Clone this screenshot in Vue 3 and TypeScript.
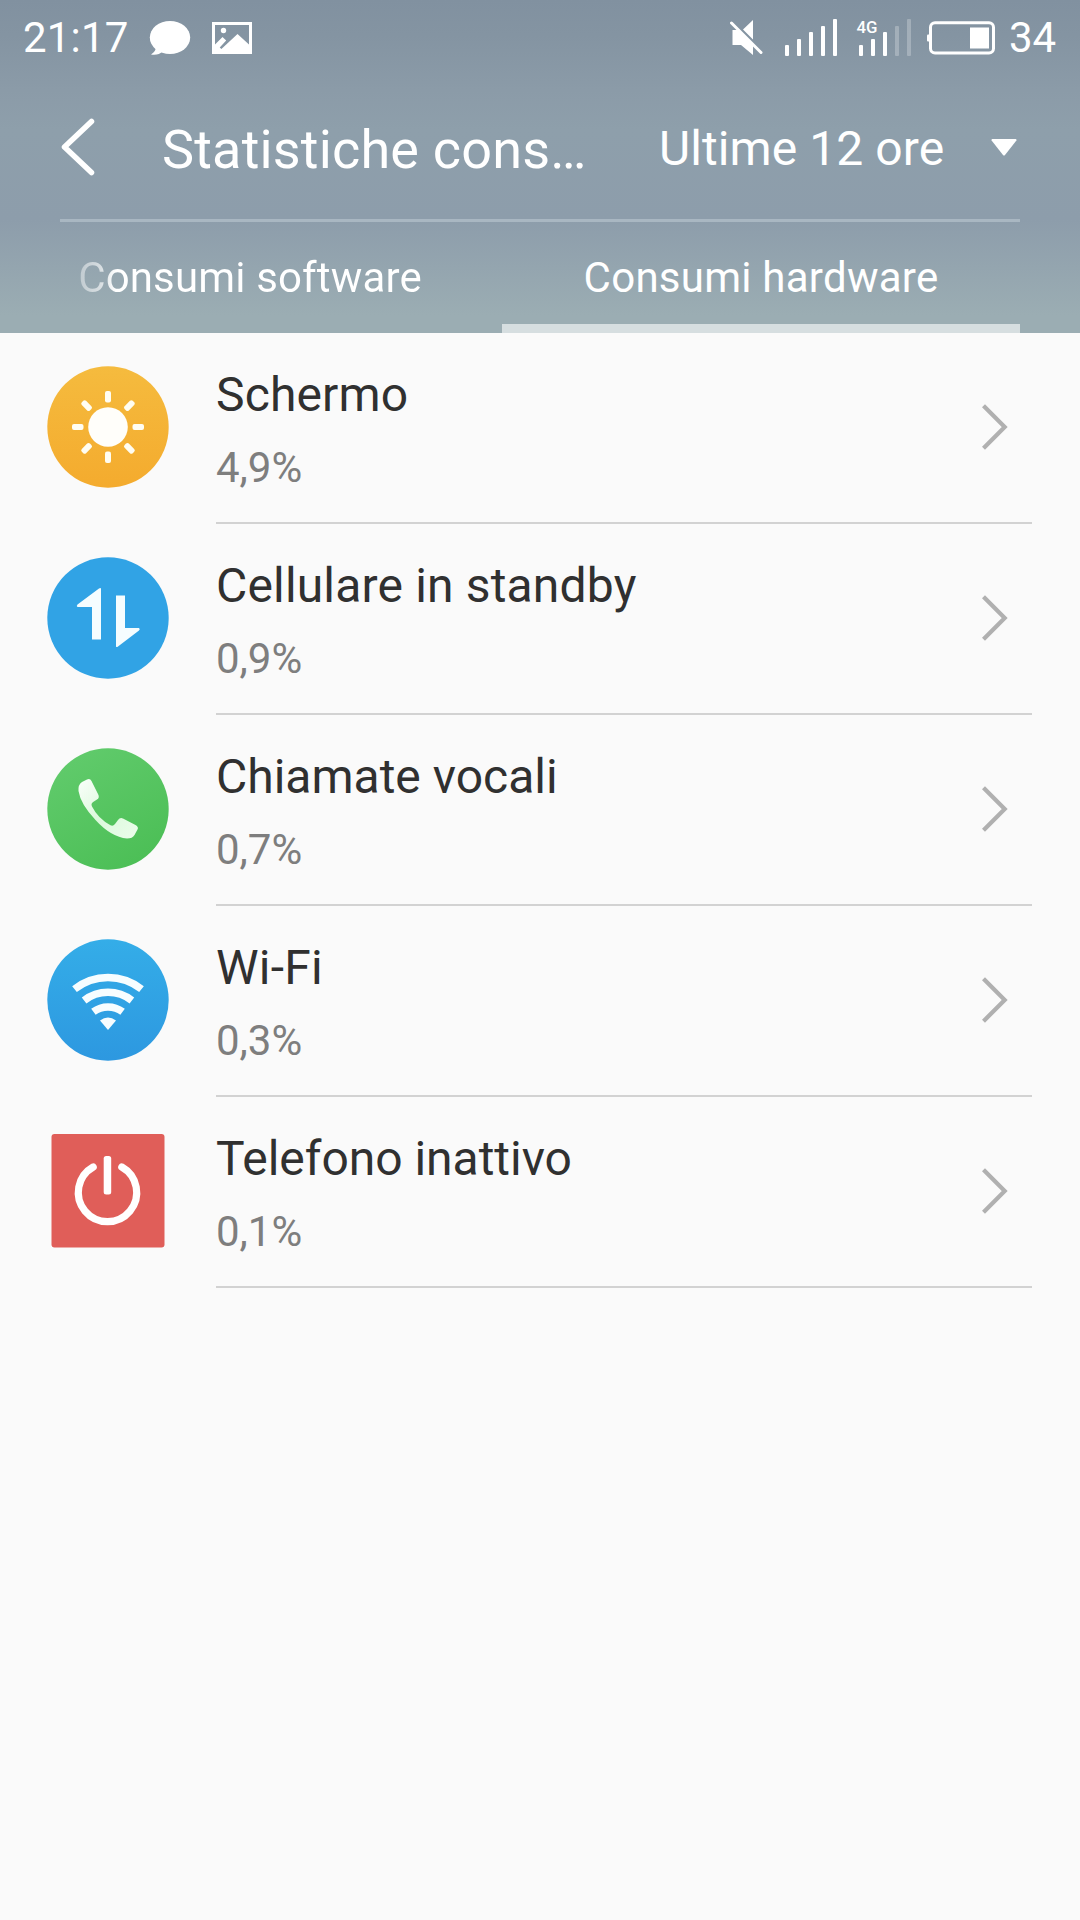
<script setup lang="ts">
import { ref } from 'vue'

type IconName = 'screen' | 'data' | 'call' | 'wifi' | 'power'

interface Consumer {
  icon: IconName
  name: string
  share: string
  spacing: string
}

const consumers: Consumer[] = [
  { icon: 'screen', name: 'Schermo', share: '4,9%', spacing: '0.15px' },
  { icon: 'data', name: 'Cellulare in standby', share: '0,9%', spacing: '0.17px' },
  { icon: 'call', name: 'Chiamate vocali', share: '0,7%', spacing: '0px' },
  { icon: 'wifi', name: 'Wi-Fi', share: '0,3%', spacing: '0.25px' },
  { icon: 'power', name: 'Telefono inattivo', share: '0,1%', spacing: '-0.03px' },
]

const tabs = ['Consumi software', 'Consumi hardware']
const activeTab = ref(1)

const bars = [
  { x: 0, top: 26 },
  { x: 12, top: 20 },
  { x: 24, top: 13 },
  { x: 36, top: 7 },
  { x: 48, top: 0 },
]
const rays = [0, 45, 90, 135, 180, 225, 270, 315]
</script>

<template>
  <div class="screen">
    <header class="header">
      <div class="status">
        <span class="clock">21:17</span>
        <svg class="bubble" width="42" height="36" viewBox="149 20 42 36">
          <ellipse cx="170" cy="37.5" rx="20.2" ry="16.6" fill="#fff" />
          <path d="M156 47 Q156 51 151 54.5 Q158 56 163 51Z" fill="#fff" />
        </svg>
        <svg class="picture" width="40" height="32" viewBox="212 22 40 32">
          <path fill="#fff" fill-rule="evenodd" d="M212 22h40v32h-40z M215 25v19.500l7.500-7.500 3.700 3.500-6.500 7 1.700 1.600L237.500 34 249 44.500V25z" />
          <circle cx="223.500" cy="30.500" r="2.700" fill="#fff" />
        </svg>
        <svg class="mute" width="34" height="38" viewBox="729 19 34 38">
          <path fill="#fff" d="M732.500 30h5L753 45.500V55L741 45h-8.500z M753 20v19.500L743 29.500z" />
          <path d="M731.500 23 761 52.500" stroke="#fff" stroke-width="3" stroke-linecap="round" />
        </svg>
        <svg class="signal" width="52" height="37" viewBox="0 0 52 37">
          <rect v-for="b in bars" :key="b.x" :x="b.x" :y="b.top" width="4" :height="37 - b.top" rx="1" fill="#fff" />
        </svg>
        <svg class="signal-4g" width="57" height="41" viewBox="-5 -4 57 41">
          <text class="net" x="-2.500" y="14" textLength="21" lengthAdjust="spacingAndGlyphs">4G</text>
          <rect v-for="(b, i) in bars" :key="b.x" :x="b.x" :y="b.top" width="4" :height="37 - b.top" rx="1" fill="#fff" :opacity="i > 2 ? 0.25 : 1" />
        </svg>
        <svg class="battery" width="68" height="34" viewBox="927 20.500 68 34">
          <rect x="930.500" y="22.300" width="63" height="30.200" rx="4.500" fill="none" stroke="#fff" stroke-width="3" />
          <rect x="927" y="34" width="3" height="7" rx="1" fill="#fff" />
          <rect x="970" y="27" width="19" height="21" fill="#fff" />
        </svg>
        <span class="level">34</span>
      </div>

      <div class="bar">
        <svg class="back" width="34" height="58" viewBox="61 118 34 58">
          <path d="M91.500 121.500 64.500 147 91.500 172.500" fill="none" stroke="#fff" stroke-width="5.500" stroke-linecap="round" stroke-linejoin="round" />
        </svg>
        <h1 class="title">Statistiche cons…</h1>
        <button class="period">
          <span class="period-text">Ultime 12 ore</span>
          <svg width="26" height="17" viewBox="0 0 26 17">
            <path d="M1.200 0H24.800Q26 0.500 25.400 1.600L14 16Q13 17 12 16L0.600 1.600Q0 0.500 1.200 0Z" fill="#fff" />
          </svg>
        </button>
      </div>

      <nav class="tabs">
        <button
          v-for="(tab, i) in tabs"
          :key="tab"
          class="tab"
          :class="{ active: i === activeTab, clipped: i === 0 }"
          @click="activeTab = i"
        >
          <span class="tab-text">{{ tab }}</span>
        </button>
      </nav>
    </header>

    <main class="list">
      <section v-for="c in consumers" :key="c.name" class="row">
        <svg class="icon" width="122" height="122" viewBox="-61 -61 122 122">
          <defs>
            <linearGradient id="g-screen" x1="0" y1="0" x2="0" y2="1">
              <stop offset="0" stop-color="#f5bb3e" /><stop offset="1" stop-color="#f4ab2e" />
            </linearGradient>
            <linearGradient id="g-wifi" x1="0" y1="0" x2="0" y2="1">
              <stop offset="0" stop-color="#34ade8" /><stop offset="1" stop-color="#2d98e0" />
            </linearGradient>
            <linearGradient id="g-call" x1="0.200" y1="0" x2="0.800" y2="1">
              <stop offset="0" stop-color="#61cb6c" /><stop offset="1" stop-color="#4bbe55" />
            </linearGradient>
            <linearGradient id="g-phone" x1="0" y1="0" x2="1" y2="1">
              <stop offset="0" stop-color="#fbfffb" /><stop offset="0.500" stop-color="#dcf9dc" /><stop offset="1" stop-color="#ebfdeb" />
            </linearGradient>
          </defs>
          <g v-if="c.icon === 'screen'">
            <circle r="60.700" fill="url(#g-screen)" />
            <circle r="19.800" fill="#fffefa" />
            <rect v-for="r in rays" :key="r" x="-3" y="-36" width="6" height="11.500" rx="2" fill="#fffdf2" :transform="`rotate(${r})`" />
          </g>
          <g v-else-if="c.icon === 'data'">
            <circle r="60.700" fill="#31a3e5" />
            <path fill="#f5fdff" d="M-7 -29.500V21.500H-16V-11H-30.500Q-32 -12 -30.500 -13.500L-9 -29.500Q-7.500 -30.500 -7 -29.500Z M8 -22.500H17V10H31Q32.500 11 31 12.500L10 28.500Q8.500 29.500 8 28.500Z" />
          </g>
          <g v-else-if="c.icon === 'call'">
            <circle r="60.700" fill="url(#g-call)" />
            <path fill="url(#g-phone)" d="M-26 -27L-21 -29.500Q-18 -31 -16.500 -28L-9.500 -14Q-8.500 -11 -11 -9.500L-14.500 -7.200Q-17.500 -5.500 -16 -2.500Q-10 9.500 2.500 16.200Q5 17.500 7 15L10 11Q12 8.200 15 9.500L27.500 16Q31 18 29.500 20.500L26.500 26Q24.500 29.500 19 29.500Q3 28 -12.500 11Q-27.500 -5 -29.500 -18Q-30 -24.500 -26 -27Z" />
          </g>
          <g v-else-if="c.icon === 'wifi'">
            <circle r="60.700" fill="url(#g-wifi)" />
            <g fill="none" stroke="#f7fdff" stroke-width="7.500">
              <path d="M-33.500 -10.900A54 54 0 0 1 33.500 -10.900" />
              <path d="M-23.900 0.500A39 39 0 0 1 23.900 0.500" />
              <path d="M-14.600 11.800A24.500 24.500 0 0 1 14.600 11.800" />
            </g>
            <path d="M-8 20.500Q0 14.500 8 20.500L0 30Z" fill="#f7fdff" />
          </g>
          <g v-else>
            <rect x="-56.500" y="-57" width="113" height="113.500" rx="3" fill="#e05e59" />
            <path d="M-14.800 -24A29.200 29.200 0 1 0 13.800 -24" fill="none" stroke="#fff" stroke-width="7.200" stroke-linecap="round" />
            <rect x="-4.300" y="-35" width="7.500" height="38.500" rx="2.500" fill="#fff" />
          </g>
        </svg>
        <div class="body">
          <div class="texts">
            <span class="name" :style="{ letterSpacing: c.spacing }">{{ c.name }}</span>
            <span class="share">{{ c.share }}</span>
          </div>
          <svg class="chevron" width="28" height="48" viewBox="0 0 28 48">
            <path d="M2.500 2.800 23.700 24 2.500 45.200" fill="none" stroke="#b0b0b0" stroke-width="4.200" />
          </svg>
        </div>
      </section>
    </main>
  </div>
</template>

<style>
body {
  background: #fafafa;
}
</style>

<style scoped>
.screen {
  width: 1080px;
  height: 1920px;
  overflow: hidden;
  background: #fafafa;
  font-family: Roboto, "Liberation Sans", sans-serif;
}
button {
  padding: 0;
  border: 0;
  background: none;
  font: inherit;
  color: inherit;
}
svg {
  display: block;
  flex: none;
}
.header {
  box-sizing: border-box;
  height: 333px;
  color: #fff;
  background: linear-gradient(#8191a0 0, #8494a2 35px, #8b9ba8 90px, #8e9fab 130px, #8d9dab 220px, #9badb3 315px, #9badb3 333px);
}
.status {
  display: flex;
  align-items: flex-start;
  height: 75px;
  font-size: 42px;
  line-height: 75px;
}
.clock {
  width: 126px;
  padding-left: 23px;
  letter-spacing: 0.2px;
  white-space: nowrap;
}
.bubble {
  margin-top: 20px;
}
.picture {
  margin: 22px 0 0 21px;
}
.mute {
  margin: 19px 0 0 477px;
}
.signal {
  margin: 19px 0 0 22px;
}
.signal-4g {
  margin: 15px 0 0 17px;
}
.net {
  font-size: 17px;
  font-weight: 500;
  fill: #fff;
}
.battery {
  margin: 20.5px 0 0 16px;
}
.level {
  margin-left: 14px;
}
.bar {
  display: flex;
  align-items: center;
  box-sizing: border-box;
  height: 147px;
  margin: 0 60px;
  border-bottom: 3px solid #a9b7c2;
}
.back {
  margin-left: 1px;
}
.title {
  margin: 5px 0 0 67px;
  width: 497px;
  font-size: 54px;
  font-weight: 400;
  letter-spacing: 0.18px;
  line-height: 64px;
  white-space: nowrap;
}
.period {
  display: flex;
  align-items: center;
  flex: 1;
  justify-content: space-between;
  padding-right: 3px;
  font-size: 48px;
  line-height: 56px;
}
.period-text {
  margin-top: 3px;
  letter-spacing: 0.08px;
  white-space: nowrap;
}
.tabs {
  display: flex;
  height: 111px;
  margin-right: 60px;
}
.tab {
  box-sizing: border-box;
  flex: 1;
  height: 111px;
  padding-top: 9px;
  border-bottom: 9px solid transparent;
  font-size: 42px;
  letter-spacing: 0.25px;
  line-height: 93px;
  text-align: center;
  white-space: nowrap;
}
.tab.clipped {
  flex: 0 0 500px;
  margin-right: 2px;
  letter-spacing: 0.15px;
}
.tab.clipped .tab-text {
  color: transparent;
  background: linear-gradient(90deg, rgba(255, 255, 255, 0.4), rgba(255, 255, 255, 0.62) 22px, #fff 38px);
  background-clip: text;
}
.tab.active {
  border-bottom-color: #d6dee0;
}
.row {
  display: flex;
  height: 191px;
}
.icon {
  margin: 33px 47px 0 47px;
}
.body {
  display: flex;
  box-sizing: border-box;
  width: 816px;
  height: 191px;
  justify-content: space-between;
  border-bottom: 2px solid #d2d2d2;
}
.texts {
  display: flex;
  flex-direction: column;
  gap: 20px;
  padding-top: 34px;
  white-space: nowrap;
}
.name {
  font-size: 48px;
  line-height: 56px;
  color: #303030;
}
.share {
  font-size: 42px;
  line-height: 50px;
  color: #7e7e7e;
}
.chevron {
  margin: 70px 23px 0 0;
}
</style>
